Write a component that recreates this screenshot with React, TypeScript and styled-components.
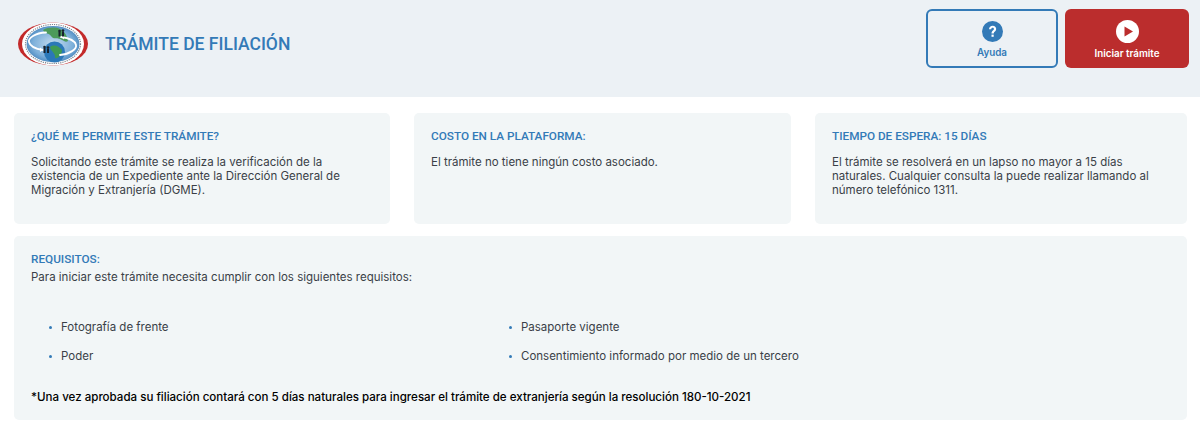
import React from 'react';
import styled, { createGlobalStyle } from 'styled-components';

const blue = '#337ab7';
const red = '#bb2d2d';

const GlobalStyle = createGlobalStyle`
  html, body {
    margin: 0;
    padding: 0;
    background: #fff;
    font-family: 'Inter', 'Liberation Sans', sans-serif;
  }
  * {
    box-sizing: border-box;
  }
`;

const Header = styled.header`
  height: 97px;
  background-color: #ecf1f5;
  display: flex;
  justify-content: space-between;
  align-items: flex-start;
  padding: 9px 11px 0 18px;
`;

const Brand = styled.div`
  display: flex;
  align-items: center;
  height: 70px;
`;

const Title = styled.h1`
  margin: 0 0 0 17px;
  font-family: 'Roboto', 'Liberation Sans', sans-serif;
  font-size: 17.5px;
  font-weight: 500;
  color: ${blue};
`;

const Actions = styled.div`
  display: flex;
  gap: 7px;
`;

const ActionButton = styled.button<{ $primary?: boolean }>`
  height: 59px;
  width: ${(p) => (p.$primary ? '124px' : '132px')};
  border-radius: 6px;
  border: ${(p) => (p.$primary ? 'none' : `2px solid ${blue}`)};
  background-color: ${(p) => (p.$primary ? red : 'transparent')};
  color: ${(p) => (p.$primary ? '#fff' : blue)};
  font-family: inherit;
  font-size: 9.8px;
  font-weight: 600;
  display: flex;
  flex-direction: column;
  align-items: center;
  justify-content: center;
  gap: 5px;
  padding: 2px 0 0;
`;

const Content = styled.main`
  padding: 16px 13px 0 14px;
  display: flex;
  flex-direction: column;
  gap: 12px;
`;

const CardRow = styled.div`
  display: grid;
  grid-template-columns: 376px 377px 372px;
  justify-content: space-between;
`;

const Card = styled.section`
  height: 111px;
  background-color: #f2f6f7;
  border-radius: 5px;
  padding: 16px 17px;
`;

const CardTitle = styled.h2`
  margin: 0 0 11px;
  font-family: 'Roboto', 'Liberation Sans', sans-serif;
  font-size: 11.75px;
  line-height: 15px;
  font-weight: 500;
  color: ${blue};
`;

const Text = styled.p`
  margin: 0;
  font-size: 11.5px;
  line-height: 14px;
  color: #3a3f47;
`;

const Requirements = styled.section`
  height: 184px;
  background-color: #f2f6f7;
  border-radius: 5px;
  padding: 16px 17px;
`;

const RequirementsTitle = styled(CardTitle)`
  margin: 0 0 3px;
`;

const List = styled.ul`
  list-style: none;
  margin: 36px 0 0;
  padding: 0;
  display: grid;
  grid-template-columns: 460px 1fr;
  row-gap: 15px;
`;

const Item = styled.li`
  position: relative;
  padding-left: 30px;
  font-size: 11.5px;
  line-height: 14px;
  color: #3a3f47;
  &::before {
    content: '';
    position: absolute;
    left: 18px;
    top: 6px;
    width: 3px;
    height: 3px;
    border-radius: 50%;
    background-color: ${blue};
  }
`;

const Note = styled.p`
  margin: 27px 0 0;
  font-size: 11.55px;
  line-height: 14px;
  font-weight: 500;
  color: #000;
`;

const Logo = () => (
  <svg width="70" height="44" viewBox="0 0 70 44">
    <defs>
      <radialGradient id="sky" cx="50%" cy="50%" r="58%">
        <stop offset="0%" stopColor="#c5dcef" />
        <stop offset="65%" stopColor="#7db0da" />
        <stop offset="100%" stopColor="#3a7ab5" />
      </radialGradient>
    </defs>
    <ellipse cx="35" cy="22" rx="35" ry="21.5" fill="#c32a2a" />
    <ellipse cx="35" cy="22" rx="31" ry="21.5" fill="#fff" />
    <ellipse cx="35" cy="22" rx="27.5" ry="19.5" fill="none" stroke="#7b848e" strokeWidth="1.2" strokeDasharray="1.2 1" />
    <ellipse cx="35" cy="22" rx="26.5" ry="18" fill="url(#sky)" />
    <path d="M25 8 C30 5 38 5 42 7 C46 9 49 13 50 19 C47 21 45 18 42 17 C38 15 36 18 33 14 C31 11 27 12 25 8 Z" fill="#4c9a5a" />
    <circle cx="36.5" cy="30" r="10.5" fill="#2b78b8" />
    <path d="M32 25 C36 22 41 24 44 28 C44 33 40 37 37 36 C38 31 33 30 32 25 Z" fill="#3f9a55" />
    <path d="M28 10.5 C17 11 10 16 11 20 C12 24 18 27 25 28" fill="none" stroke="#fff" strokeWidth="1.8" strokeLinecap="round" />
    <path d="M25 28 L22 25.5 L22 30 Z" fill="#fff" />
    <path d="M42 33 C52 32 59 27 58 23 C57 19 51 16 43 15" fill="none" stroke="#fff" strokeWidth="1.8" strokeLinecap="round" />
    <path d="M43 15 L46 12.5 L46 17.5 Z" fill="#fff" />
    <circle cx="41.5" cy="9" r="1.3" fill="#18222c" />
    <rect x="40.5" y="10" width="2" height="4.5" fill="#18222c" />
    <circle cx="45" cy="8.5" r="1.3" fill="#18222c" />
    <rect x="44" y="9.5" width="2" height="5" fill="#18222c" />
    <circle cx="26.5" cy="25" r="1.3" fill="#18222c" />
    <rect x="25.5" y="26" width="2" height="5" fill="#18222c" />
    <circle cx="30" cy="25.5" r="1.3" fill="#18222c" />
    <rect x="29" y="26.5" width="2" height="4.5" fill="#18222c" />
  </svg>
);

const HelpIcon = () => (
  <svg width="21" height="21" viewBox="0 0 21 21">
    <circle cx="10.5" cy="10.5" r="10.5" fill={blue} />
    <path d="M7 8.2 C7.1 5.9 8.7 4.7 10.7 4.7 C12.8 4.7 14.2 6 14.2 7.9 C14.2 10.2 11.7 10.4 11.7 12.6 L9.5 12.6 C9.4 9.6 11.9 9.4 11.9 7.9 C11.9 7.1 11.4 6.7 10.6 6.7 C9.8 6.7 9.2 7.3 9.2 8.2 Z" fill="#fff" />
    <rect x="9.5" y="13.6" width="2.2" height="2.2" fill="#fff" />
  </svg>
);

const PlayIcon = () => (
  <svg width="23" height="23" viewBox="0 0 23 23">
    <circle cx="11.5" cy="11.5" r="11.5" fill="#fff" />
    <path d="M8.5 6.5 L17 11.5 L8.5 16.5 Z" fill={red} />
  </svg>
);

export default function App() {
  return (
    <>
      <GlobalStyle />
      <Header>
        <Brand>
          <Logo />
          <Title>TRÁMITE DE FILIACIÓN</Title>
        </Brand>
        <Actions>
          <ActionButton>
            <HelpIcon />
            Ayuda
          </ActionButton>
          <ActionButton $primary>
            <PlayIcon />
            Iniciar trámite
          </ActionButton>
        </Actions>
      </Header>
      <Content>
        <CardRow>
          <Card>
            <CardTitle>¿QUÉ ME PERMITE ESTE TRÁMITE?</CardTitle>
            <Text>
              Solicitando este trámite se realiza la verificación de la existencia de un Expediente ante la
              Dirección General de Migración y Extranjería (DGME).
            </Text>
          </Card>
          <Card>
            <CardTitle>COSTO EN LA PLATAFORMA:</CardTitle>
            <Text>El trámite no tiene ningún costo asociado.</Text>
          </Card>
          <Card>
            <CardTitle>TIEMPO DE ESPERA: 15 DÍAS</CardTitle>
            <Text>
              El trámite se resolverá en un lapso no mayor a 15 días naturales. Cualquier consulta la puede
              realizar llamando al número telefónico 1311.
            </Text>
          </Card>
        </CardRow>
        <Requirements>
          <RequirementsTitle>REQUISITOS:</RequirementsTitle>
          <Text>Para iniciar este trámite necesita cumplir con los siguientes requisitos:</Text>
          <List>
            <Item>Fotografía de frente</Item>
            <Item>Pasaporte vigente</Item>
            <Item>Poder</Item>
            <Item>Consentimiento informado por medio de un tercero</Item>
          </List>
          <Note>
            *Una vez aprobada su filiación contará con 5 días naturales para ingresar el trámite de extranjería
            según la resolución 180-10-2021
          </Note>
        </Requirements>
      </Content>
    </>
  );
}
